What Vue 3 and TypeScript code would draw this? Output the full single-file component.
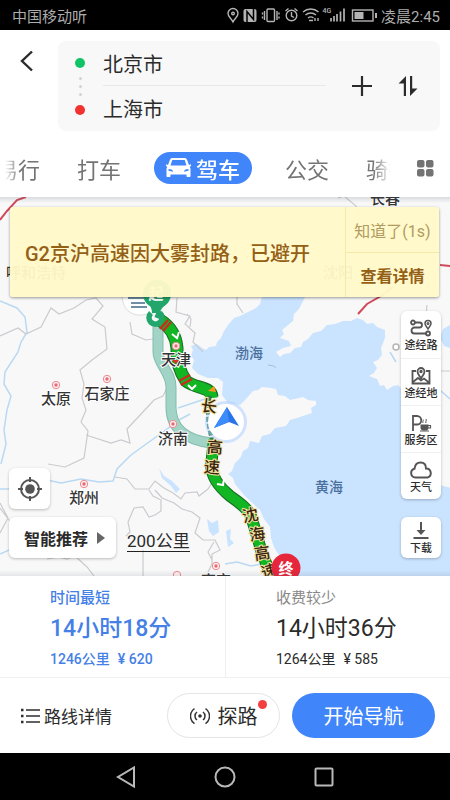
<script setup lang="ts">
import { ref } from 'vue'

interface Plan {
  id: string
  label: string
  time: string
  distance: string
  toll: string
}

interface Place {
  name: string
  x: number
  y: number
  dotX: number
  dotY: number
}

interface RoadChar {
  char: string
  x: number
  y: number
  angle: number
}

const origin = ref('北京市')
const destination = ref('上海市')
const modes = ['易行', '打车', '驾车', '公交', '骑行']
const activeMode = ref('驾车')
const noticeVisible = ref(true)

const plans: Plan[] = [
  { id: 'fast', label: '时间最短', time: '14小时18分', distance: '1246公里', toll: '¥ 620' },
  { id: 'cheap', label: '收费较少', time: '14小时36分', distance: '1264公里', toll: '¥ 585' },
]
const selectedPlan = ref('fast')

const places: Place[] = [
  { name: '太原', x: 56, y: 404, dotX: 56, dotY: 385 },
  { name: '石家庄', x: 107, y: 399, dotX: 107, dotY: 379 },
  { name: '济南', x: 173, y: 444, dotX: 173, dotY: 424 },
  { name: '郑州', x: 84, y: 503, dotX: 84, dotY: 484 },
  { name: '南京', x: 216, y: 586, dotX: 216, dotY: 566 },
  { name: '天津', x: 176, y: 365, dotX: 176, dotY: 346 },
]

const roadChars: RoadChar[] = [
  { char: '长', x: 209, y: 412, angle: 8 },
  { char: '高', x: 215, y: 453, angle: 4 },
  { char: '速', x: 212, y: 473, angle: 4 },
  { char: '沈', x: 250, y: 521, angle: -12 },
  { char: '海', x: 257, y: 540, angle: -8 },
  { char: '高', x: 262, y: 559, angle: -8 },
  { char: '速', x: 269, y: 577, angle: -14 },
]

const tools = [
  { id: 'route', label: '途经路' },
  { id: 'place', label: '途经地' },
  { id: 'service', label: '服务区' },
  { id: 'weather', label: '天气' },
]
</script>

<template>
  <div class="app">
    <header class="status">
      <span>中国移动听</span>
      <div class="status-right">
        <svg class="status-icons" viewBox="226 6 152 18" fill="none" stroke="#b4b4b4" stroke-width="1.4" aria-hidden="true">
          <path d="M233 22c-2-4-5-5.500-5-8.500a5 5 0 0 1 10 0c0 3-3 4.500-5 8.500z" />
          <circle cx="233" cy="13.500" r="1.300" />
          <rect x="243.500" y="9" width="13" height="13" rx="2" fill="#b4b4b4" stroke="none" />
          <path d="M247 22V11.500l6.500 8V9" stroke="#000" stroke-width="1.500" />
          <rect x="267" y="9" width="7.500" height="12.500" rx="1" />
          <path d="M264.500 11v9M277 11v9M262.500 12.500v2m0 2v2M279 12.500v2m0 2v2" />
          <circle cx="291.500" cy="15.500" r="5.300" />
          <path d="M291.500 12v4l2.500 1.500M285.500 11l3-2.500M297.500 11l-3-2.500" />
          <path d="M303 12c4.500-4 11-4 15.500 0M305.500 15c3-2.600 7.500-2.600 10.500 0M308 18c1.800-1.400 3.800-1.400 5.500 0M309 20.500h4M315 18v3M318 18v3" />
          <path d="M331 18v3.500M334 16v5.500M337 14v7.500M340.500 11.500v10M344 8.500v13" stroke-width="1.700" />
          <text x="322.500" y="13" font-size="7" font-weight="500" fill="#b4b4b4" stroke="none">4G</text>
          <rect x="352.500" y="10" width="20.500" height="11" />
          <rect x="354.500" y="12" width="9" height="7" fill="#b4b4b4" stroke="none" />
          <path d="M376 13v5" stroke-width="2" />
        </svg>
        <span>凌晨2:45</span>
      </div>
    </header>

    <section class="search">
      <button class="back" type="button" aria-label="返回">
        <svg width="14" height="22" viewBox="0 0 14 22" fill="none" stroke="#2b2b2b" stroke-width="2.400"><path d="M12 1.500L2 11l10 9.500" /></svg>
      </button>
      <div class="trip">
        <div class="rail" aria-hidden="true">
          <i class="dot start"></i>
          <i class="speck"></i><i class="speck"></i><i class="speck"></i>
          <i class="dot end"></i>
        </div>
        <div class="fields">
          <input v-model="origin" type="text" aria-label="起点" />
          <input v-model="destination" type="text" aria-label="终点" />
        </div>
        <button type="button" aria-label="添加途经点">
          <svg width="20" height="20" viewBox="0 0 20 20" stroke="#2b2b2b" stroke-width="2.200"><path d="M0 10h20M10 0v20" /></svg>
        </button>
        <button type="button" aria-label="交换起终点">
          <svg width="20" height="22" viewBox="0 0 20 22" fill="#2b2b2b"><path d="M8 1v20H5.800V8.500H.5zM12 21V1h2.200v12.500h5.300z" /></svg>
        </button>
      </div>
    </section>

    <nav class="modes">
      <div class="strip">
        <button
          v-for="mode in modes"
          :key="mode"
          type="button"
          :class="{ active: mode === activeMode }"
          @click="activeMode = mode"
        >
          <svg v-if="mode === activeMode" width="25" height="20" viewBox="0 0 25 20" fill="#fff" aria-hidden="true">
            <path fill-rule="evenodd" d="M6.500 0h12c1.300 0 2 .6 2.500 1.800l2 5.200L25 6.200V8l-1.300.8c.6.8.8 1.600.8 2.700V18c0 .7-.4 1-1 1h-2c-.7 0-1-.4-1-1v-1.500h-16V18c0 .7-.4 1-1 1h-2c-.6 0-1-.3-1-1v-6.500c0-1.100.2-1.900.8-2.700L0 8V6.200L2 7l2-5.200C4.500.6 5.200 0 6.500 0zM6.300 2L4.500 7.500h16L18.700 2zM2.500 11v1.800l4.500 1c0-1.600-1.500-2.800-4.500-2.800zm20 0c-3 0-4.500 1.200-4.500 2.800l4.500-1z" />
          </svg>
          {{ mode }}
        </button>
      </div>
      <button class="all" type="button" aria-label="全部出行方式">
        <svg width="17" height="17" viewBox="0 0 17 17" fill="#737373"><rect width="7.500" height="7.500" rx="2" /><rect x="9" width="7.500" height="7.500" rx="2" /><rect y="9" width="7.500" height="7.500" rx="2" /><rect x="9" y="9" width="7.500" height="7.500" rx="2" /></svg>
      </button>
    </nav>

    <main class="map">
      <svg class="canvas" viewBox="0 197 450 379" preserveAspectRatio="xMidYMid slice" role="img" aria-label="路线地图">
        <rect y="197" width="450" height="379" fill="#f8f8f9" />
        <path
          fill="#cae3ff"
          d="M262 297L260 304 256 308 246 313 240 316 234 318 228 325 224 331 221 338 217 342 216 346 209 347 206 350 202 348 197 344 191 346 193 350 191 355 194 360 192 368 198 374 208 378 218 378 223 382 222 395 228 403 240 405 246 399 253 391 258 390 262 387 271 388 276 389 278 395 285 396 290 400 303 397 308 400 316 401 316 405 311 408 312 413 300 417 290 420 286 426 275 428 270 434 262 436 259 443 250 441 248 448 243 451 241 457 235 463 232 471 228 474 233 478 235 484 244 495 260 510 264 519 270 527 271 538 274 547 280 557 290 577H451V488L436 484 428 450 420 410 398 385 393 386 387 390 384 385 380 386 377 379 369 376 374 373 377 368 373 362 378 360 382 355 381 348 385 338 385 330 377 327 373 323 367 324 363 320 357 318 351 321 343 321 335 324 327 325 321 331 313 333 308 339 303 342 301 347 295 348 290 353 284 354 280 357 276 352 283 348 291 346 289 341 280 338 284 334 282 330 293 321 294 314 299 309 305 297z"
        />
        <path d="M450 325l-7 4-3 9 4 8 6 2z" fill="#cae3ff" />
        <path d="M268 365l6 1 2 2" fill="none" stroke="#a9bdd0" />
        <g fill="none" stroke="#b9d9f3" stroke-width="1.500">
          <path d="M0 301l17 7 8 9 2 15-6 10-3 10-13 20-1 12 7 12-4 14-3 20 2 14-5 20" />
          <path d="M0 489h35l12-9 14 3 20-4 18 3 14-1 4-12 14-14 18-13 14-10 16-12 11-6M178 408l12-4 18-6" />
          <path d="M0 554l18-8 14 5M225 564l12-2 14 4 10-2M432 383l18 16M390 352l6 10" />
        </g>
        <path d="M159 468l5 8 8 5 8 8-4 4-5-7-9-8zM207 519l5 4 6-3 1 12-6 4-4-5zM226 531l5-2-1 10 4 4-6 4z" fill="#cae3ff" />
        <g fill="none" stroke="#cbcbcf" stroke-width="1.200">
          <path d="M0 336l18-8 8 6 15-7 10-19 8 6 15-6 12-8 10-2 7 8-11 13 13 8 2 22-15 11-12 10 4 14-2 14 4 12-5 12 7 9-4 27-19 9-17-3" />
          <path d="M86 435l25 8 10-3 9 3-3-14 15-16 12-13 9-4 4-8" />
          <path d="M115 477l12 2 8 10 14 0 6-8 9 7 9 5 8 6 4-6 12-1 2 4 9-7 6-10 6-6" />
          <path d="M149 490l4 6 8 4v11l-6 4-6 2-6-10-9 1-6 14 2 10-4 4" />
          <path d="M155 490l7 8 12 5 8 6 10 3 8 6-5 15 8 7 12 0 5 10-8 4v10l-6 12M212 560l-4-8 6-10" />
          <path d="M0 503l8 15-8 15M0 508l12 16M143 550v26M47 559l12-2 8 2 8-3 12 11 7 9" />
          <path d="M130 322l2 12 14 6 14-2M177 298l-1 14 14 4-5 8 10 9-2 9 10 10M187 314l4 5-1 8" />
          <path d="M237 297v7l6 9M338 198l6-2 12 10 3 10M427 305l-1 10M441 371h9" />
        </g>
        <path d="M0 220l7-9 10-11 9-3M358 314l9-10 14-8 12-9M440 265l10 1" fill="none" stroke="#d14a5c" stroke-width="2" />
        <circle cx="396" cy="347" r="3" fill="#fff" stroke="#b5b5b5" stroke-width="1.500" />

        <g class="city">
          <text x="385" y="204">长春</text>
          <text x="36" y="278">呼和浩特</text>
          <text x="338" y="278">沈阳</text>
        </g>

        <!-- Start weather bubble, pin and route lines -->
        <path d="M122 294c0 14 8 22 20 21l12-2v-20z" fill="#fff" stroke="#ddd" />
        <path d="M128 298h18M131 303h14M131 307h16" stroke="#436b87" stroke-width="1.600" />
        <g fill="none">
          <path stroke="#83bdae" stroke-width="11" d="M158 322v30c0 12 13 20 13 35v20c0 21 14 33 40 36" />
          <path stroke="#a1d4c6" stroke-width="9" d="M158 322v30c0 12 13 20 13 35v20c0 21 14 33 40 36" />
        </g>
        <g fill="none" stroke-linejoin="round">
          <path stroke="#176c25" stroke-width="13" d="M160 320C171 327 176 336 177 348C176 362 180 372 186 381C196 389 211 386 212 397" />
          <path stroke="#12b622" stroke-width="11" d="M160 320C171 327 176 336 177 348C176 362 180 372 186 381C196 389 211 386 212 398" />
          <path stroke="#2b7a4b" stroke-width="4" stroke-dasharray="5 2" d="M210 396C206 412 208 428 214 446" />
          <path stroke="#176c25" stroke-width="12" d="M214 440L211 466C212 478 219 487 230 496C240 503 248 509 251 516L262 553L272 578" />
          <path stroke="#12b622" stroke-width="10" d="M214 440L211 466C212 478 219 487 230 496C240 503 248 509 251 516L262 553L272 578" />
        </g>
        <path d="M160 329l8-9M163 331l8-9M181 385l11-6M179 381l11-6" stroke="#c92c20" stroke-width="2.500" />
        <path d="M172 334l5 4 2-6M188 385l4 4 4-4M217 484l6 1 1-6" fill="none" stroke="#fff" stroke-width="2" />
        <path d="M208 391l6-5 2 6z" fill="#f7951d" />
        <circle cx="157" cy="294" r="14" fill="#22a66b" />
        <path d="M149 304c2 3 3 6 3 9h8c0-3 3-6 6-9z" fill="#22a66b" />
        <circle cx="155" cy="318" r="4" fill="#f8f8f9" />
        <path d="M151 313a6.500 6.500 0 1 0 9 0M157 318l3-7" fill="none" stroke="#22a66b" stroke-width="5.500" />
        <text class="pin" x="156" y="299">起</text>

        <circle cx="177" cy="575" r="3.700" fill="#fff0f0" stroke="#eb8b91" />
        <g v-for="place in places" :key="place.name">
          <circle :cx="place.dotX" :cy="place.dotY" r="3.700" fill="#fff0f0" stroke="#eb8b91" />
          <circle :cx="place.dotX" :cy="place.dotY" r="1.700" fill="#e66a73" />
          <text class="city" :x="place.x" :y="place.y">{{ place.name }}</text>
        </g>
        <text class="sea" x="249" y="358">渤海</text>
        <text class="sea" x="329" y="492">黄海</text>
        <path d="M172 360h7l-3 4z" fill="#df2e22" />

        <circle cx="226" cy="422" r="21" fill="#a9cbff" opacity=".5" />
        <circle cx="226" cy="422" r="18" fill="#fff" />
        <path d="M227 407l12 19-10-4-15 6z" fill="#2874e8" />
        <path d="M227 407l2 15-15 6z" fill="#3d8cfb" />

        <text
          v-for="(item, index) in roadChars"
          :key="index"
          class="road"
          :x="item.x"
          :y="item.y"
          :transform="`rotate(${item.angle} ${item.x} ${item.y - 6})`"
        >{{ item.char }}</text>

        <circle cx="286" cy="568" r="14.500" fill="#e5263b" />
        <text class="pin" x="286" y="574">终</text>
      </svg>

      <aside v-if="noticeVisible" class="notice">
        <strong>G2京沪高速因大雾封路，已避开</strong>
        <div class="notice-actions">
          <button type="button" @click="noticeVisible = false">知道了(1s)</button>
          <button class="detail" type="button">查看详情</button>
        </div>
      </aside>

      <div class="tools">
        <div class="panel">
          <button v-for="tool in tools" :key="tool.id" type="button">
            <svg width="24" height="18" viewBox="0 0 24 18" fill="none" stroke="#555" stroke-width="1.800" aria-hidden="true">
              <template v-if="tool.id === 'route'">
                <circle cx="4" cy="3.500" r="2" /><path d="M6 3.500h4.500a2.500 2.500 0 0 1 0 5H5.500a3 3 0 0 0 0 6H17" /><circle cx="19" cy="14.500" r="2" /><path d="M19 10c-1-2-3-3.400-3-5.500a3 3 0 0 1 6 0c0 2.100-2 3.500-3 5.500z" stroke-width="1.500" /><circle cx="19" cy="4.500" r=".6" />
              </template>
              <template v-else-if="tool.id === 'place'">
                <path d="M7 4H3.500v12.500h17V4H17M4 15l5-4 3 2.500 3-2 5 4" /><path d="M12 11.500C10.500 8.500 8.500 7 8.500 4.500a3.500 3.500 0 0 1 7 0c0 2.500-2 4-3.500 7z" /><circle cx="12" cy="4.500" r=".8" />
              </template>
              <template v-else-if="tool.id === 'service'">
                <path d="M4 17V2h4a4 4 0 0 1 0 8.500H4" /><path d="M11.500 10.500h8v3a3 3 0 0 1-3 3h-2a3 3 0 0 1-3-3z" fill="#555" stroke="none" /><path d="M19 11.500h2.500v2.500H19M11 17h9" stroke-width="1.200" /><path d="M14 9c-1-1.500 1-2 0-3.500M17 9c-1-1.500 1-2 0-4" stroke-width="1" />
              </template>
              <path v-else d="M6 16.500a4.500 4.500 0 0 1-.5-8.800C6 3.500 8.500 1.500 11.500 1.500c3.500 0 5.500 2.500 5.500 6a4.600 4.600 0 0 1 1.500 9z" stroke-width="2" />
            </svg>
            <span>{{ tool.label }}</span>
          </button>
        </div>
        <div class="panel">
          <button class="download" type="button">
            <svg width="18" height="18" viewBox="0 0 18 18" fill="#555" aria-hidden="true"><path d="M8 0h2v8h3.500L9 13 4.500 8H8zM1.500 15h15v2h-15z" /></svg>
            <span>下载</span>
          </button>
        </div>
      </div>

      <div class="corner">
        <button class="locate" type="button" aria-label="我的位置">
          <svg width="26" height="26" viewBox="0 0 26 26" fill="none" stroke="#555" stroke-width="2"><circle cx="13" cy="13" r="9" /><circle cx="13" cy="13" r="4.800" fill="#555" stroke="none" /><path d="M13 1v5M13 20v5M1 13h5M20 13h5" /></svg>
        </button>
        <div class="corner-row">
          <button class="prefer" type="button">
            智能推荐
            <svg width="8" height="12" viewBox="0 0 8 12" fill="#666" aria-hidden="true"><path d="M0 0l8 6-8 6z" /></svg>
          </button>
          <span class="scale">200公里</span>
        </div>
      </div>
    </main>

    <section class="plans">
      <button
        v-for="plan in plans"
        :key="plan.id"
        type="button"
        :class="['plan', { chosen: plan.id === selectedPlan }]"
        @click="selectedPlan = plan.id"
      >
        <span class="plan-label">{{ plan.label }}</span>
        <span class="plan-time">{{ plan.time }}</span>
        <span class="plan-meta"><span>{{ plan.distance }}</span><span>{{ plan.toll }}</span></span>
      </button>
    </section>

    <section class="actions">
      <button class="steps" type="button">
        <svg width="19" height="16" viewBox="0 0 19 16" stroke="#2f2f2f" stroke-width="1.500" aria-hidden="true"><path d="M5 2h14M5 8h14M5 14h14" /><path d="M0 2h2.500M0 8h2.500M0 14h2.500" stroke-width="2.500" /></svg>
        路线详情
      </button>
      <button class="scout" type="button">
        <svg width="20" height="18" viewBox="0 0 20 18" fill="none" stroke="#333" stroke-width="1.500" aria-hidden="true"><circle cx="10" cy="9" r="1.800" fill="#333" stroke="none" /><path d="M7 5a5 5 0 0 0 0 8M13 5a5 5 0 0 1 0 8M4.500 1.500a9 9 0 0 0 0 15M15.500 1.500a9 9 0 0 1 0 15" /></svg>
        探路
        <i class="badge"></i>
      </button>
      <button class="go" type="button">开始导航</button>
    </section>

    <footer class="system">
      <button type="button" aria-label="系统返回"><svg width="20" height="22" viewBox="0 0 20 22"><path d="M18 1.500v19L2 11z" /></svg></button>
      <button type="button" aria-label="主屏幕"><svg width="22" height="22" viewBox="0 0 22 22"><circle cx="11" cy="11" r="9.500" /></svg></button>
      <button type="button" aria-label="最近任务"><svg width="20" height="20" viewBox="0 0 20 20"><rect x="1.500" y="1.500" width="17" height="17" rx="1" /></svg></button>
    </footer>
  </div>
</template>

<style>
body {
  margin: 0;
}
</style>

<style scoped>
.app {
  display: flex;
  flex-direction: column;
  min-height: 100vh;
  overflow: hidden;
  background: #fff;
  color: #2b2b2b;
  font-family: Roboto, "Noto Sans CJK SC", sans-serif;
}
.app *,
.app {
  box-sizing: border-box;
}
button {
  display: flex;
  align-items: center;
  justify-content: center;
  padding: 0;
  border: 0;
  background: none;
  color: inherit;
  font: inherit;
  white-space: nowrap;
  cursor: pointer;
}
svg {
  display: block;
  flex: none;
}
.status {
  display: flex;
  align-items: center;
  justify-content: space-between;
  height: 30px;
  padding: 0 10px 0 12px;
  background: #000;
  color: #adadad;
  font-size: 15px;
}
.status-right {
  display: flex;
  align-items: center;
  gap: 3px;
}
.status-icons {
  width: 152px;
  height: 18px;
}
.search {
  display: flex;
  align-items: flex-start;
  padding: 11px 10px 0 20px;
}
.back {
  width: 38px;
  height: 40px;
  justify-content: flex-start;
}
.trip {
  display: flex;
  flex: 1;
  align-items: center;
  height: 90px;
  padding: 0 22px 0 16px;
  gap: 26px;
  border-radius: 8px;
  background: #f8f8f8;
}
.rail {
  display: flex;
  flex-direction: column;
  align-items: center;
  gap: 5px;
  width: 12px;
}
.dot {
  width: 10px;
  height: 10px;
  border-radius: 50%;
}
.start {
  margin-bottom: 4px;
  background: #0fc368;
}
.end {
  margin-top: 4px;
  background: #f33232;
}
.speck {
  width: 3px;
  height: 3px;
  border-radius: 50%;
  background: #d2d2d2;
}
.fields {
  flex: 1;
  min-width: 0;
  margin-left: -9px;
}
.fields input {
  display: block;
  width: 100%;
  height: 45px;
  padding: 0;
  border: 0;
  outline: 0;
  background: none;
  color: #2b2b2b;
  font: inherit;
  font-size: 20px;
}
.fields input:first-child {
  border-bottom: 1px solid #e8e8e8;
}
.modes {
  display: flex;
  align-items: center;
  height: 66px;
  padding: 8px 16px 0 0;
}
.strip {
  display: flex;
  flex: 1;
  gap: 29px;
  min-width: 0;
  overflow: hidden;
  -webkit-mask-image: linear-gradient(90deg, transparent 5px, #000 20px, #000 calc(100% - 22px), transparent calc(100% - 4px));
  mask-image: linear-gradient(90deg, transparent 5px, #000 20px, #000 calc(100% - 22px), transparent calc(100% - 4px));
}
.strip button {
  flex: none;
  height: 32px;
  padding: 0 4px;
  color: #747474;
  font-size: 22px;
}
.strip button:first-child {
  margin-left: -8px;
}
.strip .active {
  gap: 5px;
  padding: 0 12px;
  border-radius: 16px;
  background: #4085fa;
  color: #fff;
  font-weight: 500;
}
.all {
  width: 39px;
  height: 32px;
  justify-content: flex-end;
}
.map {
  position: relative;
  flex: 1;
  min-height: 379px;
  overflow: hidden;
  background: #f8f8f9;
}
.canvas {
  position: absolute;
  inset: 0;
  width: 100%;
  height: 100%;
}
.canvas text {
  text-anchor: middle;
}
.map::before,
.map::after {
  content: "";
  position: absolute;
  z-index: 1;
  right: 0;
  left: 0;
  height: 6px;
  pointer-events: none;
}
.map::before {
  top: 0;
  background: linear-gradient(rgba(60, 70, 80, 0.16), rgba(60, 70, 80, 0));
}
.map::after {
  bottom: 0;
  background: linear-gradient(rgba(60, 70, 80, 0), rgba(60, 70, 80, 0.1));
}
.city {
  fill: #353535;
  stroke: #fff;
  stroke-width: 2px;
  paint-order: stroke;
  font-size: 15px;
  font-weight: 500;
}
.sea {
  fill: #4a719e;
  font-size: 14px;
  font-weight: 500;
}
.road {
  fill: #3a2410;
  stroke: #f4e3a1;
  stroke-width: 2px;
  paint-order: stroke;
  font-size: 16px;
  font-weight: 500;
}
.pin {
  fill: #fff;
  font-size: 15px;
  font-weight: 700;
}
.notice {
  position: absolute;
  z-index: 2;
  top: 10px;
  left: 10px;
  right: 11px;
  display: flex;
  height: 90px;
  border-radius: 3px;
  background: rgba(255, 249, 201, 0.96);
  box-shadow: 0 1px 3px rgba(0, 0, 0, 0.4);
  color: #936016;
}
.notice strong {
  flex: 1;
  align-self: center;
  padding-left: 15px;
  font-size: 20px;
  font-weight: 500;
  white-space: nowrap;
}
.notice-actions {
  display: grid;
  grid-template-rows: 1fr 1fr;
  width: 94px;
  border-left: 1px solid #f3eaaa;
}
.notice-actions button {
  color: #b29b60;
  font-size: 16px;
}
.notice-actions .detail {
  border-top: 1px solid #f3eaaa;
  color: #936016;
  font-weight: 700;
}
.tools {
  position: absolute;
  right: 9px;
  bottom: 18px;
  display: flex;
  flex-direction: column;
  gap: 18px;
  width: 40px;
}
.panel,
.locate,
.prefer {
  border-radius: 6px;
  background: #fff;
  box-shadow: 0 1px 3px rgba(0, 0, 0, 0.25);
}
.panel button {
  flex-direction: column;
  gap: 2px;
  width: 100%;
  height: 47px;
  padding-top: 3px;
  font-size: 11px;
  line-height: 14px;
  font-weight: 500;
}
.panel button + button {
  border-top: 1px solid #f0f0f0;
}
.panel .download {
  height: 41px;
}
.corner {
  position: absolute;
  bottom: 18px;
  left: 9px;
  display: flex;
  flex-direction: column;
  gap: 8px;
}
.locate {
  width: 41px;
  height: 41px;
}
.corner-row {
  display: flex;
  align-items: center;
  gap: 11px;
}
.prefer {
  justify-content: space-between;
  width: 107px;
  height: 41px;
  padding: 0 11px 0 15px;
  font-size: 16px;
  font-weight: 700;
}
.scale {
  border-bottom: 1px solid #222;
  font-size: 17px;
  line-height: 20px;
  margin-top: 8px;
}
.plans {
  display: grid;
  grid-template-columns: 1fr 1fr;
  border-bottom: 1px solid #f0f0f0;
}
.plan {
  flex-direction: column;
  align-items: flex-start;
  height: 101px;
  padding: 2px 0 0 50px;
  text-align: left;
}
.plan + .plan {
  border-left: 1px solid #f0f0f0;
}
.plan-label {
  color: #888;
  font-size: 15px;
  line-height: 22px;
}
.plan-time {
  font-size: 23px;
  line-height: 40px;
}
.plan-meta {
  display: flex;
  gap: 8px;
  font-size: 14px;
  line-height: 20px;
}
.chosen,
.chosen .plan-label {
  color: #4580e6;
  font-weight: 500;
}
.actions {
  display: flex;
  align-items: center;
  justify-content: space-between;
  height: 75px;
  padding: 0 15px 0 21px;
}
.steps {
  gap: 4px;
  font-size: 17px;
}
.scout,
.go {
  height: 45px;
  border-radius: 23px;
  font-size: 20px;
}
.scout {
  position: relative;
  gap: 8px;
  width: 113px;
  margin-left: auto;
  margin-right: 12px;
  border: 1px solid #e4e4e4;
}
.badge {
  position: absolute;
  top: 6px;
  right: 12px;
  width: 9px;
  height: 9px;
  border-radius: 50%;
  background: #f33f3f;
}
.go {
  width: 143px;
  background: #4085fa;
  color: #fff;
}
.system {
  display: flex;
  align-items: center;
  justify-content: center;
  gap: 78px;
  height: 47px;
  background: #000;
}
.system svg {
  fill: none;
  stroke: #b9b9b9;
  stroke-width: 2;
}
</style>
